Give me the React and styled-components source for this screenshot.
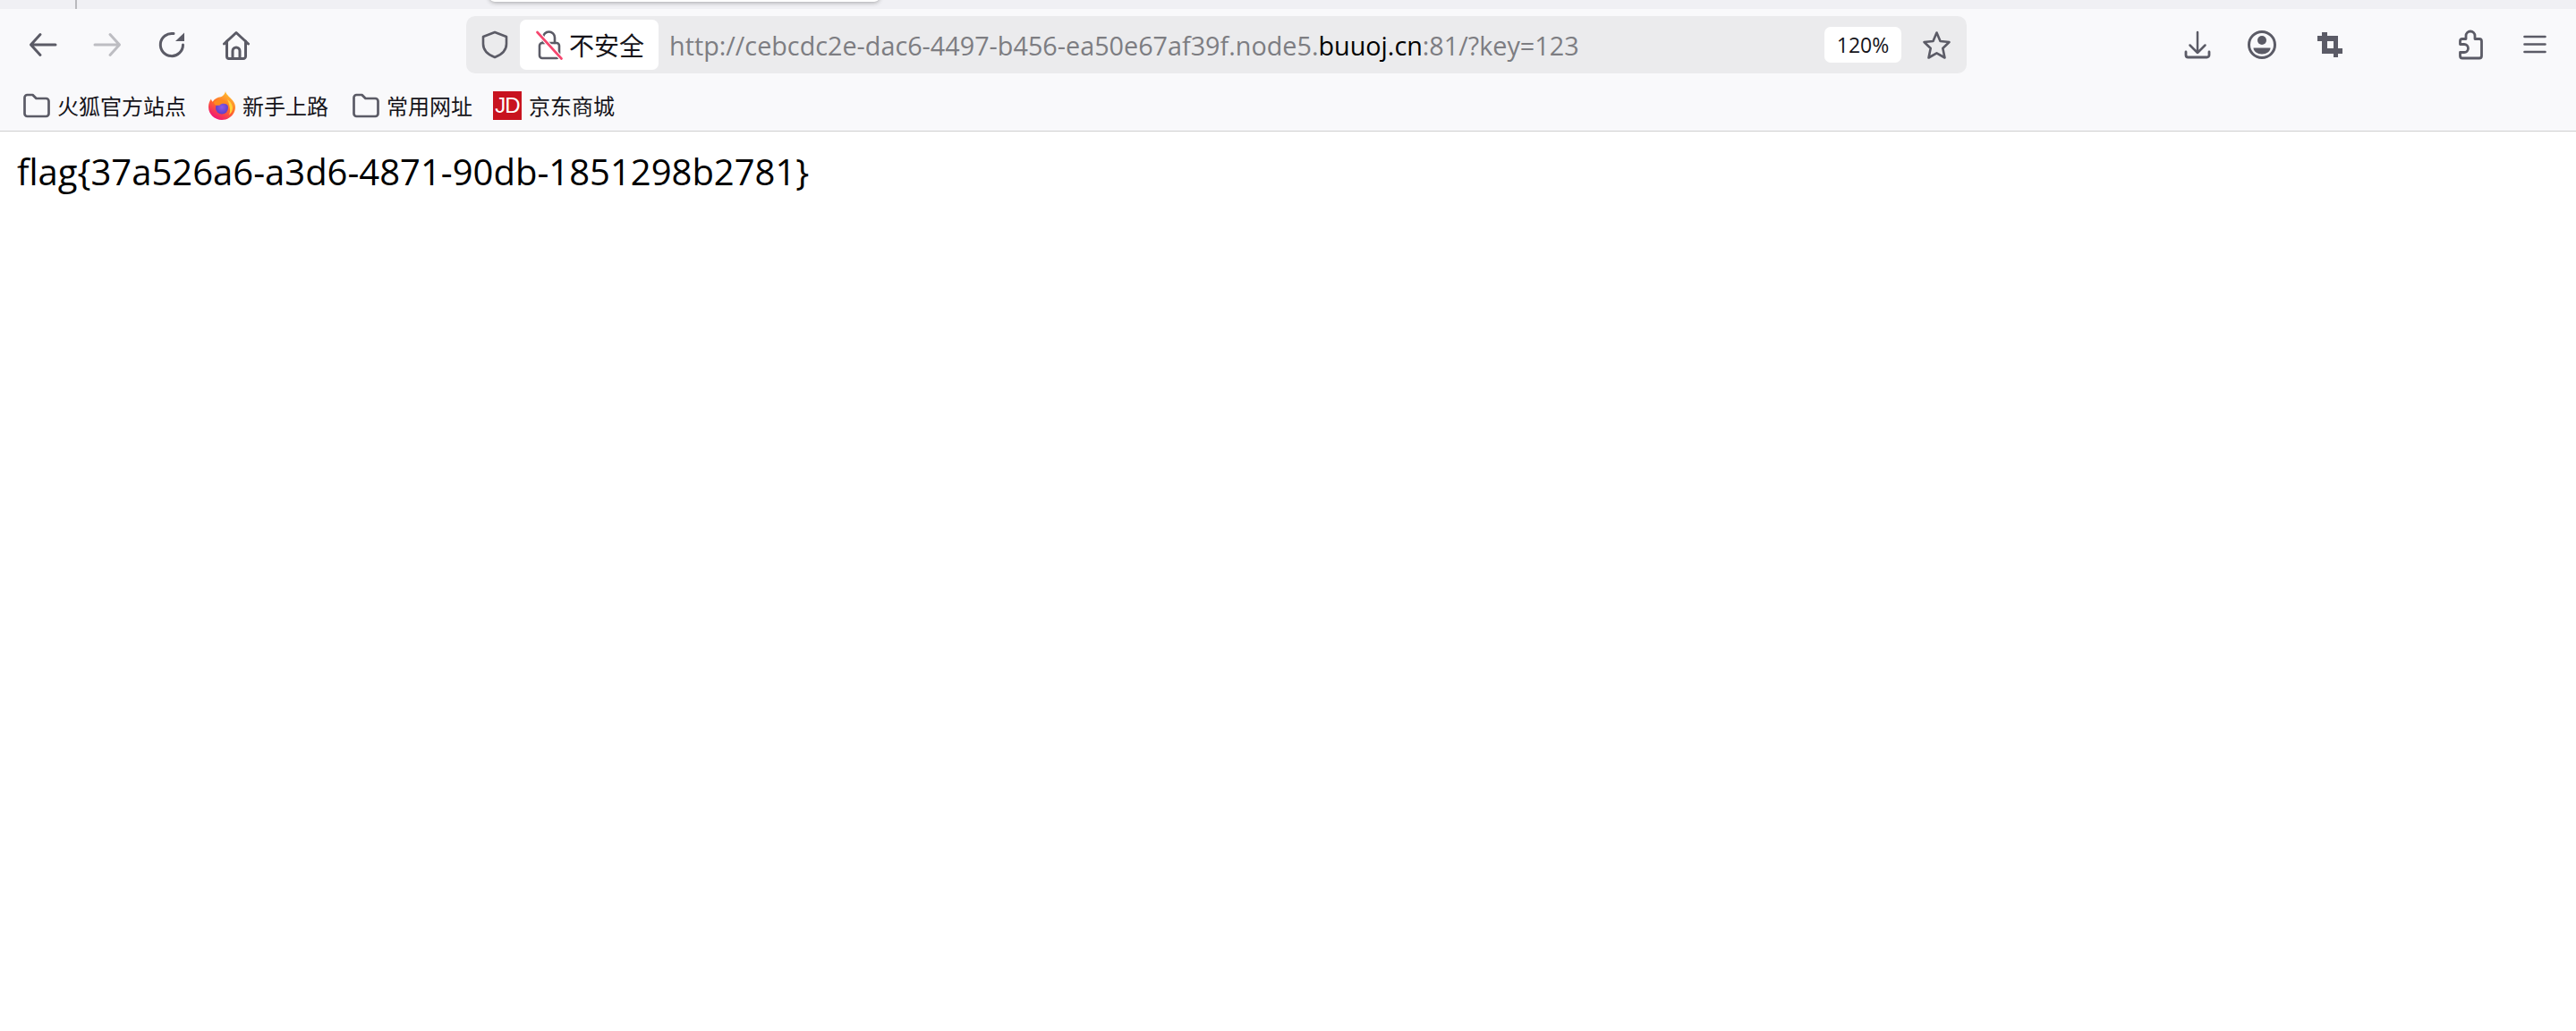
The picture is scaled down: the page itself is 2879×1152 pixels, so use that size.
import React from "react";
import styled, { createGlobalStyle } from "styled-components";

const UI_FONT = `"Open Sans", "Noto Sans CJK SC", sans-serif`;
const CJK_FONT = `"Noto Sans CJK SC", "Noto Sans", sans-serif`;

const Global = createGlobalStyle`
  html, body { margin: 0; padding: 0; background: #fff; overflow: hidden; }
  #root { min-height: 1152px; }
`;

const Window = styled.div`
  width: 2879px;
  height: 1152px;
  background: #fff;
  display: flex;
  flex-direction: column;
  font-family: ${UI_FONT};
  position: relative;
  overflow: hidden;
`;
const TabStrip = styled.div`
  height: 10px;
  background: #f0f0f4;
  position: relative;
  flex: none;
  overflow: hidden;
`;
const TabDivider = styled.div`
  position: absolute;
  left: 84px;
  top: 0;
  width: 2px;
  height: 10px;
  background: #b9b9bd;
`;
const Popup = styled.div`
  position: absolute;
  left: 547px;
  top: -10px;
  width: 436px;
  height: 12px;
  background: #fff;
  border-radius: 0 0 6px 6px;
  box-shadow: 0 1px 5px rgba(0, 0, 0, 0.32);
`;
const Toolbar = styled.div`
  height: 80px;
  flex: none;
  background: #f9f9fb;
  display: flex;
  align-items: center;
  padding-left: 12px;
  box-sizing: border-box;
`;
const IconButton = styled.div`
  width: ${(p) => p.$w || 72}px;
  height: 36px;
  flex: none;
  display: flex;
  align-items: center;
  justify-content: center;
  color: #5b5b66;
  margin-left: ${(p) => p.$ml || 0}px;
`;
const UrlBar = styled.div`
  width: 1677px;
  height: 64px;
  margin-left: 221px;
  flex: none;
  background: #ebebed;
  border-radius: 10px;
  display: flex;
  align-items: center;
  padding-right: 17px;
  box-sizing: border-box;
`;
const ShieldSlot = styled.div`
  width: 60px;
  flex: none;
  display: flex;
  justify-content: center;
  padding-left: 3px;
  box-sizing: border-box;
  color: #5b5b66;
`;
const SecurityBadge = styled.div`
  width: 155px;
  height: 56px;
  flex: none;
  background: #fff;
  border-radius: 7px;
  display: flex;
  align-items: center;
  padding-left: 18px;
  gap: 7px;
  box-sizing: border-box;
  color: #15141a;
  font-family: ${CJK_FONT};
  font-size: 28px;
`;
const UrlText = styled.div`
  margin-left: 12px;
  font-size: 28.75px;
  color: #7d7d82;
  white-space: nowrap;
`;
const UrlHost = styled.span`
  color: #000;
`;
const ZoomBadge = styled.div`
  margin-left: auto;
  width: 86px;
  height: 40px;
  flex: none;
  background: #fff;
  border-radius: 7px;
  display: flex;
  align-items: center;
  justify-content: center;
  font-size: 23px;
  color: #15141a;
`;
const StarSlot = styled.div`
  margin-left: 23px;
  width: 33px;
  flex: none;
  display: flex;
  color: #5b5b66;
`;
const Actions = styled.div`
  margin-left: 222px;
  display: flex;
  align-items: center;
`;
const BookmarksBar = styled.div`
  height: 56px;
  flex: none;
  background: #f9f9fb;
  display: flex;
  align-items: center;
  padding-left: 26px;
  gap: 25px;
  box-sizing: border-box;
`;
const Bookmark = styled.div`
  display: flex;
  align-items: center;
  gap: 8px;
  margin-left: ${(p) => p.$ml || 0}px;
  color: #15141a;
  font-family: ${CJK_FONT};
  font-size: 24px;
  line-height: 32px;
`;
const FolderIcon = styled.span`
  display: flex;
  color: #5b5b66;
`;
const JdLogo = styled.span`
  width: 32px;
  height: 32px;
  flex: none;
  background: #c8131f;
  color: #fff;
  display: flex;
  align-items: center;
  justify-content: center;
  font-family: "Liberation Sans", sans-serif;
  font-size: 24px;
  letter-spacing: -1px;
`;
const Rule = styled.div`
  height: 1px;
  flex: none;
  background: #cfcfd0;
`;
const Page = styled.main`
  flex: 1;
  background: #fff;
  padding: 20px 20px 0 19px;
  font-size: 40px;
  line-height: 50px;
  color: #000;
  white-space: nowrap;
`;

const Stroke = ({ size = 36, sw = 3, children, box = 36 }) => (
  <svg width={size} height={size} viewBox={`0 0 ${box} ${box}`} fill="none" stroke="currentColor"
    strokeWidth={sw} strokeLinecap="round" strokeLinejoin="round">{children}</svg>
);

const Back = () => <Stroke><path d="M15 6.5 4.5 18 15 29.5M5 18h27" /></Stroke>;
const Forward = () => <Stroke><path d="M21 6.5 31.5 18 21 29.5M31 18H4" stroke="#bdbdc2" /></Stroke>;
const Reload = () => (
  <Stroke>
    <path d="M30.5 18A12.6 12.6 0 1 1 20 5.6" />
    <path d="M22 14 32 4.5V14Z" fill="currentColor" stroke="none" />
  </Stroke>
);
const Home = () => (
  <Stroke>
    <path d="M4.5 17 18 4.5 31.5 17" />
    <path d="M7.500 14v17a2.500 2.500 0 0 0 2.500 2.500h16a2.500 2.500 0 0 0 2.500-2.500V14" />
    <path d="M14 33v-8a4 4 0 0 1 8 0v8" />
  </Stroke>
);
const Shield = () => (
  <Stroke size={32} box={32} sw={2.6}>
    <path d="M16 2 29 7v8c0 7-5 12-13 15C8 27 3 22 3 15V7Z" />
  </Stroke>
);
const Lock = () => (
  <svg width="30" height="34" viewBox="0 0 30 34" fill="none" strokeLinecap="round">
    <path d="M8 15V9a6.500 6.500 0 0 1 13 0v6" stroke="#5b5b66" strokeWidth="2.600" />
    <rect x="4" y="15" width="22" height="17" rx="3" stroke="#5b5b66" strokeWidth="2.600" />
    <path d="M1.500 3 28.500 32.500" stroke="#fff" strokeWidth="5" />
    <path d="M1.500 3 28.500 32.500" stroke="#f5466e" strokeWidth="2.600" />
  </svg>
);
const Star = () => (
  <Stroke size={33} box={33} sw={2.6}>
    <path d="M16.500 2.500 20.500 12 30.500 13 23.300 20 25.500 30.500 16.500 25.300 7.500 30.500 9.700 20 2.500 13 12.500 12Z" />
  </Stroke>
);
const Download = () => (
  <Stroke sw={2.5}>
    <path d="M18 4v23M9.500 18.500 18 27l8.500-8.500" />
    <path d="M5 26v3.500a2.500 2.500 0 0 0 2.500 2.500h21a2.500 2.500 0 0 0 2.500-2.500V26" strokeWidth="2.800" />
  </Stroke>
);
const Account = () => (
  <Stroke>
    <circle cx="18" cy="18" r="14.500" />
    <circle cx="18" cy="13" r="5" fill="currentColor" stroke="none" />
    <path d="M8.500 21.500h19c0 4-4.500 7-9.500 7s-9.500-3-9.500-7Z" fill="currentColor" stroke="none" />
  </Stroke>
);
const Crop = () => (
  <svg width="36" height="36" viewBox="0 0 36 36" fill="currentColor" fillRule="evenodd">
    <path d="M9 4h6v4h12v14h5v6h-5v4h-5v-4H9V14H4V8h5ZM15 14v8h7v-8Z" />
  </svg>
);
const Extension = () => (
  <Stroke sw={2.8}>
    <path d="M9 33h19a2.500 2.500 0 0 0 2.500-2.500V14A2.500 2.500 0 0 0 28 11.500h-5V8a5 5 0 0 0-10 0v3.500H9A2.500 2.500 0 0 0 6.500 14v3.500H11a4.500 4.500 0 0 1 0 9H6.500v4A2.500 2.500 0 0 0 9 33Z" />
  </Stroke>
);
const Menu = () => (
  <Stroke sw={2.6}>
    <path d="M6.500 9h23M6.500 17.500h23M6.500 26h23" />
  </Stroke>
);
const Folder = () => (
  <svg width="30" height="28" viewBox="0 0 30 28" fill="none" stroke="currentColor" strokeWidth="2.700" strokeLinejoin="round">
    <path d="M1.500 5A3 3 0 0 1 4.500 2H10.500L14.500 6H25.500A3 3 0 0 1 28.500 9V23A3 3 0 0 1 25.500 26H4.500A3 3 0 0 1 1.500 23Z" />
  </svg>
);
const Firefox = () => (
  <svg width="30" height="32" viewBox="0 0 30 32">
    <defs>
      <linearGradient id="ffOuter" x1="0.8" y1="0.1" x2="0.3" y2="1">
        <stop offset="0" stopColor="#ffbd2e" />
        <stop offset="0.5" stopColor="#ff6a2b" />
        <stop offset="1" stopColor="#f0107a" />
      </linearGradient>
      <radialGradient id="ffGlobe" cx="0.5" cy="0.45" r="0.6">
        <stop offset="0" stopColor="#8c5ae8" />
        <stop offset="1" stopColor="#5b3bc4" />
      </radialGradient>
    </defs>
    <path d="M19 0c.6 3.500 3 4.500 5.500 7.500C28 11 30 14 30 17.500 30 25.500 23.300 32 15 32S0 25.500 0 17.500C0 14 1 11 3 8.500c.2 1.500.8 2.500 1.700 3.200C6.500 8.500 10 6.500 14 6.200 16.500 5 18.500 3 19 0Z" fill="url(#ffOuter)" />
    <path d="M21 9c3.500 2.500 6 5.500 6 9.500 0 3-1.500 6-4 8 1-2.500 1.500-5 .8-8C23.300 15 22.500 12 21 9Z" fill="#ffd43b" />
    <circle cx="15" cy="18.500" r="7" fill="url(#ffGlobe)" />
    <path d="M6 12c3-2.500 7-3.500 11-2 2.500 1 4.500 3.500 5 6-1.500-1.800-4-2.600-6-2.200-1.700.3-3 1-3.500 2H8.500C7 15 6 13.500 6 12Z" fill="#ff8a1f" />
  </svg>
);

export default function App() {
  return (
    <Window>
      <Global />
      <TabStrip>
        <TabDivider />
        <Popup />
      </TabStrip>
      <Toolbar>
        <IconButton><Back /></IconButton>
        <IconButton><Forward /></IconButton>
        <IconButton><Reload /></IconButton>
        <IconButton><Home /></IconButton>
        <UrlBar>
          <ShieldSlot><Shield /></ShieldSlot>
          <SecurityBadge><Lock />不安全</SecurityBadge>
          <UrlText>
            http://cebcdc2e-dac6-4497-b456-ea50e67af39f.node5.<UrlHost>buuoj.cn</UrlHost>:81/?key=123
          </UrlText>
          <ZoomBadge>120%</ZoomBadge>
          <StarSlot><Star /></StarSlot>
        </UrlBar>
        <Actions>
          <IconButton><Download /></IconButton>
          <IconButton><Account /></IconButton>
          <IconButton $ml={4}><Crop /></IconButton>
          <IconButton $ml={85}><Extension /></IconButton>
          <IconButton><Menu /></IconButton>
        </Actions>
      </Toolbar>
      <BookmarksBar>
        <Bookmark><FolderIcon><Folder /></FolderIcon>火狐官方站点</Bookmark>
        <Bookmark><Firefox />新手上路</Bookmark>
        <Bookmark $ml={2}><FolderIcon><Folder /></FolderIcon>常用网址</Bookmark>
        <Bookmark $ml={-2}><JdLogo>JD</JdLogo>京东商城</Bookmark>
      </BookmarksBar>
      <Rule />
      <Page>flag{"{"}37a526a6-a3d6-4871-90db-1851298b2781{"}"}</Page>
    </Window>
  );
}
